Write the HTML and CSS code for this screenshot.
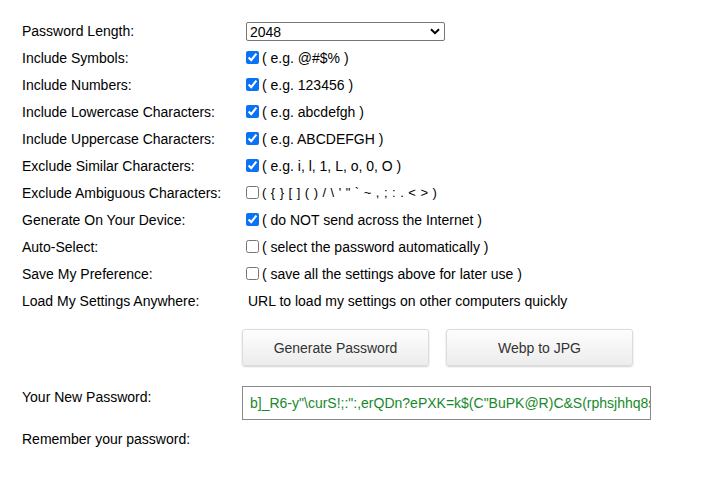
FILE: index.html
```html
<!DOCTYPE html>
<html>
<head>
<meta charset="utf-8">
<link rel="stylesheet" href="styles.css">
</head>
<body>
<div class="form">
  <div class="row"><div class="label">Password Length:</div><div class="val"><select class="sel"><option>2048</option></select></div></div>
  <div class="row"><div class="label">Include Symbols:</div><div class="val"><input type="checkbox" class="cb" checked><span>( e.g. @#$% )</span></div></div>
  <div class="row"><div class="label">Include Numbers:</div><div class="val"><input type="checkbox" class="cb" checked><span>( e.g. 123456 )</span></div></div>
  <div class="row"><div class="label">Include Lowercase Characters:</div><div class="val"><input type="checkbox" class="cb" checked><span>( e.g. abcdefgh )</span></div></div>
  <div class="row"><div class="label">Include Uppercase Characters:</div><div class="val"><input type="checkbox" class="cb" checked><span>( e.g. ABCDEFGH )</span></div></div>
  <div class="row"><div class="label">Exclude Similar Characters:</div><div class="val"><input type="checkbox" class="cb" checked><span>( e.g. i, l, 1, L, o, 0, O )</span></div></div>
  <div class="row"><div class="label">Exclude Ambiguous Characters:</div><div class="val"><input type="checkbox" class="cb"><span class="amb">( { } [ ] ( ) / \ ' " ` ~ , ; : . &lt; &gt; )</span></div></div>
  <div class="row"><div class="label">Generate On Your Device:</div><div class="val"><input type="checkbox" class="cb" checked><span>( do NOT send across the Internet )</span></div></div>
  <div class="row"><div class="label">Auto-Select:</div><div class="val"><input type="checkbox" class="cb"><span>( select the password automatically )</span></div></div>
  <div class="row"><div class="label">Save My Preference:</div><div class="val"><input type="checkbox" class="cb"><span>( save all the settings above for later use )</span></div></div>
  <div class="row"><div class="label">Load My Settings Anywhere:</div><div class="val"><span class="url">URL to load my settings on other computers quickly</span></div></div>
  <div class="btnrow"><div></div><div class="btns"><button class="btn">Generate Password</button><button class="btn">Webp to JPG</button></div></div>
  <div class="pwrow"><div class="label pwlabel">Your New Password:</div><div><input class="pw" type="text" value="b]_R6-y&quot;\curS!;:&quot;:,erQDn?ePXK=k$(C&quot;BuPK@R)C&amp;S(rphsjhhq8s"></div></div>
  <div class="remrow"><div class="label">Remember your password:</div><div></div></div>
</div>
</body>
</html>
```

FILE: styles.css
```css
html, body {
  margin: 0;
  padding: 0;
  background: #fff;
}
body {
  font-family: "Liberation Sans", Arial, sans-serif;
  font-size: 14px;
  color: #000;
}
.form {
  padding: 17px 0 0 22px;
}
.row, .btnrow, .pwrow, .remrow {
  display: grid;
  grid-template-columns: 220px 1fr;
}
.row {
  height: 27px;
  align-items: center;
}
.val {
  display: flex;
  align-items: center;
  padding-left: 4px;
}
.sel {
  appearance: none;
  -webkit-appearance: none;
  width: 199px;
  height: 19px;
  border: 1px solid #767676;
  border-radius: 2px;
  background: #fff url("data:image/svg+xml;utf8,<svg xmlns='http://www.w3.org/2000/svg' width='10' height='7' viewBox='0 0 10 7'><path d='M1 1.2 L5 5.2 L9 1.2' fill='none' stroke='%23000' stroke-width='2'/></svg>") no-repeat right 4px center;
  font-family: "Liberation Sans", Arial, sans-serif;
  font-size: 14px;
  padding: 0 0 0 3px;
  margin: 2px 0 0 0;
  color: #000;
}
.cb {
  width: 13px;
  height: 13px;
  margin: 0 3px 0 0;
  accent-color: #0a73f5;
}
.amb {
  font-size: 13px;
  letter-spacing: 0.45px;
}
.url {
  padding-left: 2px;
}
.btnrow {
  margin-top: 15px;
}
.btns {
  display: flex;
  gap: 17px;
}
.btn {
  width: 187px;
  height: 37px;
  font-family: "Liberation Sans", Arial, sans-serif;
  font-size: 14px;
  color: #333;
  background: linear-gradient(#fefefe, #ececec);
  border: 1px solid #dcdcdc;
  border-radius: 3px;
  box-shadow: 0 1px 2px rgba(0, 0, 0, 0.18);
  padding: 0;
}
.pwrow {
  margin-top: 20px;
  align-items: start;
}
.pwlabel {
  padding-top: 3px;
}
.pw {
  box-sizing: border-box;
  width: 409px;
  height: 34px;
  border: 1px solid #8a8a8a;
  border-radius: 0;
  padding: 0 0 0 7px;
  font-family: "Liberation Sans", Arial, sans-serif;
  font-size: 14px;
  color: #17892b;
  margin: 0;
  outline: none;
}
.remrow {
  margin-top: 11px;
  height: 16px;
}
```
